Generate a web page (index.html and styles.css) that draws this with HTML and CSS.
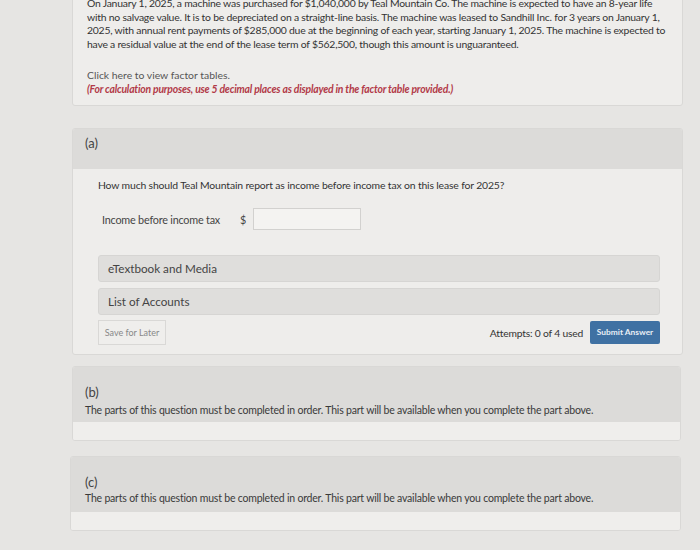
FILE: index.html
```html
<!DOCTYPE html>
<html>
<head>
	<meta charset="utf-8">
	<title>Question</title>
	<link rel="stylesheet" href="styles.css">
</head>
<body>
	<div class="page">
		<div class="card intro">
			<p class="problem">On January 1, 2025, a machine was purchased for $1,040,000 by Teal Mountain Co. The machine is expected to have an 8-year life with no salvage value. It is to be depreciated on a straight-line basis. The machine was leased to Sandhill Inc. for 3 years on January 1, 2025, with annual rent payments of $285,000 due at the beginning of each year, starting January 1, 2025. The machine is expected to have a residual value at the end of the lease term of $562,500, though this amount is unguaranteed.</p>
			<p class="link">Click here to view factor tables.</p>
			<p class="note">(For calculation purposes, use 5 decimal places as displayed in the factor table provided.)</p>
		</div>

		<div class="card part">
			<div class="part-head">(a)</div>
			<div class="part-body">
				<p class="question">How much should Teal Mountain report as income before income tax on this lease for 2025?</p>
				<div class="answer-row">
					<span class="answer-label">Income before income tax</span>
					<span class="dollar">$</span>
					<span class="answer-input"></span>
				</div>
				<div class="bar bar-first">eTextbook and Media</div>
				<div class="bar">List of Accounts</div>
				<div class="actions">
					<span class="btn-save">Save for Later</span>
					<span class="attempts">Attempts: 0 of 4 used</span>
					<span class="btn-submit">Submit Answer</span>
				</div>
			</div>
		</div>

		<div class="card part locked">
			<div class="part-head">
				<div class="part-label">(b)</div>
				<div class="part-msg">The parts of this question must be completed in order. This part will be available when you complete the part above.</div>
			</div>
			<div class="part-foot"></div>
		</div>

		<div class="card part locked">
			<div class="part-head">
				<div class="part-label">(c)</div>
				<div class="part-msg">The parts of this question must be completed in order. This part will be available when you complete the part above.</div>
			</div>
			<div class="part-foot"></div>
		</div>
	</div>
</body>
</html>
```

FILE: styles.css
```css
body{
	margin: 0px;
	padding: 0px;
	background: #e6e5e3;
	font-family: Lato, "Open Sans", sans-serif;
	color: #3b3b3b;
	overflow: hidden;
}

.page{
	width: 611px;
	margin-left: 72px;
}

p{
	margin: 0px;
}

.card{
	background: #eeedeb;
	border: 1px solid #d9d8d6;
	border-radius: 3px;
	box-sizing: border-box;
}

.intro{
	margin-top: -12px;
	padding: 8px 12px 14px 14px;
	height: 118px;
}

.problem{
	font-size: 10.4px;
	line-height: 13.7px;
	letter-spacing: -0.22px;
	color: #333;
}

.link{
	margin-top: 16px;
	font-size: 10.4px;
	line-height: 14px;
	color: #555;
}

.note{
	font-size: 10.4px;
	line-height: 14px;
	font-style: italic;
	font-weight: bold;
	color: #b23a48;
	letter-spacing: -0.2px;
}

.part{
	margin-top: 22px;
	overflow: hidden;
}

.part-head{
	background: #dcdbd9;
	height: 40px;
	padding: 6px 0px 0px 12px;
	font-size: 13px;
	line-height: 16px;
	box-sizing: border-box;
	color: #444;
}

.part-body{
	padding: 6px 22px 9px 25px;
}

.question{
	font-size: 10.4px;
	line-height: 20px;
	letter-spacing: -0.15px;
	color: #333;
}

.answer-row{
	display: flex;
	align-items: center;
	margin-top: 12px;
	height: 24px;
	font-size: 10.8px;
	color: #444;
	letter-spacing: -0.2px;
}

.answer-label{
	margin-left: 4px;
	width: 138px;
}

.dollar{
	width: 13px;
}

.answer-input{
	width: 106px;
	height: 20px;
	background: #f4f3f1;
	border: 1px solid #d2d1cf;
}

.bar{
	margin-top: 6px;
	height: 25px;
	line-height: 25px;
	padding-left: 9px;
	background: #dfdedc;
	border: 1px solid #d6d5d3;
	border-radius: 3px;
	font-size: 11.7px;
	color: #444;
}

.bar-first{
	margin-top: 24px;
}

.actions{
	display: flex;
	align-items: center;
	margin-top: 5px;
}

.btn-save{
	width: 66px;
	height: 23px;
	line-height: 23px;
	text-align: center;
	border: 1px solid #d9d8d6;
	background: #efeeec;
	font-size: 9px;
	color: #888;
}

.attempts{
	margin-left: auto;
	margin-right: 7px;
	font-size: 10.3px;
	color: #333;
	letter-spacing: -0.2px;
}

.btn-submit{
	width: 70px;
	height: 23px;
	line-height: 23px;
	text-align: center;
	background: #3f71a3;
	border-radius: 2px;
	color: #e8eef5;
	font-size: 8.4px;
	font-weight: bold;
}

.locked{
	margin-top: 11px;
	width: 609px;
}

.locked + .locked{
	margin-top: 15px;
	margin-left: -2px;
	width: 611px;
}

.locked .part-head{
	height: 55px;
	padding-top: 17px;
	padding-left: 12px;
}

.locked + .locked .part-head{
	padding-top: 17px;
	padding-left: 14px;
}

.part-label{
	font-size: 13px;
	line-height: 16px;
	margin-bottom: 2px;
}

.locked + .locked .part-label{
	margin-bottom: 0px;
}

.part-msg{
	font-size: 10.5px;
	line-height: 16px;
	letter-spacing: -0.2px;
	color: #3a3a3a;
}

.part-foot{
	height: 18px;
	background: #efeeec;
}
```
